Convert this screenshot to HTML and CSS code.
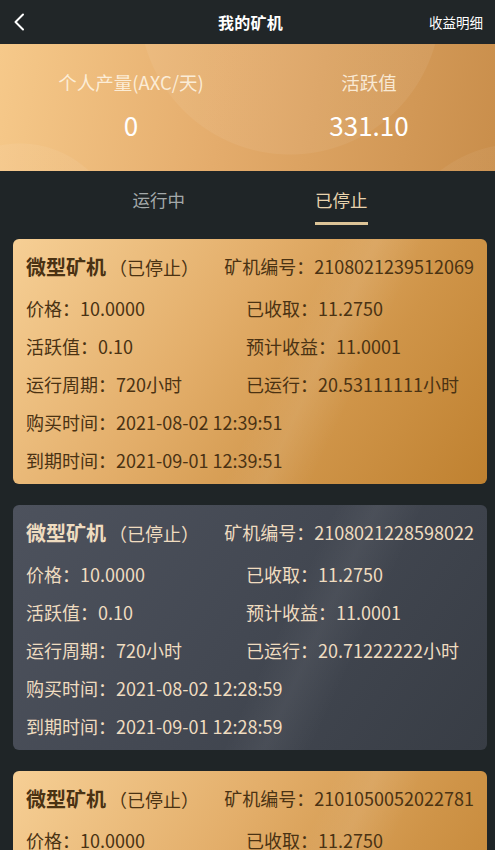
FILE: index.html
```html
<!DOCTYPE html>
<html lang="zh-CN">
<head>
<meta charset="utf-8">
<title>我的矿机</title>
<link rel="stylesheet" href="styles.css">
</head>
<body>
<header class="topbar">
  <span class="back">
    <svg width="12" height="18" viewBox="0 0 12 18"><path d="M10 1.5 L2.5 9 L10 16.5" fill="none" stroke="#fff" stroke-width="2" stroke-linecap="round" stroke-linejoin="round"/></svg>
  </span>
  <h1 class="title">我的矿机</h1>
  <span class="detail">收益明细</span>
</header>

<section class="banner">
  <div class="stat">
    <div class="stat-label">个人产量(AXC/天)</div>
    <div class="stat-value">0</div>
  </div>
  <div class="stat">
    <div class="stat-label">活跃值</div>
    <div class="stat-value">331.10</div>
  </div>
</section>

<nav class="tabs">
  <div class="tab">运行中</div>
  <div class="tab active">已停止</div>
</nav>

<main class="list">
  <div class="card gold">
    <div class="card-head">
      <div class="name"><b>微型矿机</b><span class="state">（已停止）</span></div>
      <div class="code">矿机编号：2108021239512069</div>
    </div>
    <div class="grid">
      <div class="row">价格：10.0000</div>
      <div class="row">已收取：11.2750</div>
      <div class="row">活跃值：0.10</div>
      <div class="row">预计收益：11.0001</div>
      <div class="row">运行周期：720小时</div>
      <div class="row">已运行：20.53111111小时</div>
      <div class="row full">购买时间：2021-08-02 12:39:51</div>
      <div class="row full">到期时间：2021-09-01 12:39:51</div>
    </div>
  </div>

  <div class="card slate">
    <div class="card-head">
      <div class="name"><b>微型矿机</b><span class="state">（已停止）</span></div>
      <div class="code">矿机编号：2108021228598022</div>
    </div>
    <div class="grid">
      <div class="row">价格：10.0000</div>
      <div class="row">已收取：11.2750</div>
      <div class="row">活跃值：0.10</div>
      <div class="row">预计收益：11.0001</div>
      <div class="row">运行周期：720小时</div>
      <div class="row">已运行：20.71222222小时</div>
      <div class="row full">购买时间：2021-08-02 12:28:59</div>
      <div class="row full">到期时间：2021-09-01 12:28:59</div>
    </div>
  </div>

  <div class="card gold">
    <div class="card-head">
      <div class="name"><b>微型矿机</b><span class="state">（已停止）</span></div>
      <div class="code">矿机编号：2101050052022781</div>
    </div>
    <div class="grid">
      <div class="row">价格：10.0000</div>
      <div class="row">已收取：11.2750</div>
      <div class="row">活跃值：0.10</div>
      <div class="row">预计收益：11.0001</div>
      <div class="row">运行周期：720小时</div>
      <div class="row">已运行：20.71222222小时</div>
      <div class="row full">购买时间：2021-01-05 00:52:02</div>
      <div class="row full">到期时间：2021-02-04 00:52:02</div>
    </div>
  </div>
</main>
</body>
</html>
```

FILE: styles.css
```css
* { box-sizing: border-box; margin: 0; padding: 0; }
html, body { background: #1f2527; }
body {
  font-family: "Noto Sans CJK SC", "Noto Sans", sans-serif;
  color: #fff;
  width: 495px;
  overflow: hidden;
}
.topbar {
  height: 44px;
  background: #212628;
  display: flex;
  align-items: center;
  justify-content: space-between;
  padding: 0 12px 0 13px;
}
.back { width: 60px; display: flex; align-items: center; height: 44px; }
.back svg { display: block; }
.title {
  font-size: 16px;
  font-weight: 700;
  color: #fff;
  letter-spacing: 0.3px;
  padding-left: 5px;
}
.detail { width: 60px; font-size: 13.5px; text-align: right; white-space: nowrap; color: #fff; }

.banner {
  height: 127px;
  display: grid;
  grid-template-columns: 238px 238px;
  padding-left: 12px;
  padding-bottom: 2px;
  align-content: center;
  background:
    radial-gradient(circle at 20px 200px, rgba(255,255,255,0.06) 0 100px, transparent 101px),
    radial-gradient(circle at 290px -40px, rgba(255,255,255,0.06) 0 150px, transparent 151px),
    radial-gradient(circle at 520px 230px, rgba(255,255,255,0.05) 0 130px, transparent 131px),
    linear-gradient(100deg, #f6c98a 0%, #e4ac6c 45%, #c98e4b 100%);
}
.stat { text-align: center; }
.stat-label {
  font-size: 18.5px;
  line-height: 24px;
  color: rgba(255, 247, 232, 0.85);
}
.stat-value {
  font-size: 26px;
  line-height: 36px;
  margin-top: 13px;
  color: #fff;
}

.tabs {
  display: flex;
  justify-content: center;
  gap: 130px;
  padding-left: 5px;
  height: 68px;
}
.tab {
  font-size: 17.5px;
  line-height: 28px;
  padding-top: 15px;
  color: #a3a9aa;
  height: 54px;
}
.tab.active {
  color: #e8d3ad;
  border-bottom: 3px solid #dcc497;
  height: 54px;
}

.list { padding: 0 8px 0 13px; display: flex; flex-direction: column; gap: 21px; }
.card {
  border-radius: 6px;
  padding: 12px 13px 5px 13px;
  height: 245px;
  font-size: 18px;
}
.card.gold {
  color: #4a3213;
  background:
    linear-gradient(115deg, rgba(255,255,255,0) 55%, rgba(255,255,255,0.08) 62%, rgba(255,255,255,0) 70%),
    linear-gradient(125deg, #f6cf95 0%, #e3ae6a 40%, #cf9448 70%, #bf8130 100%);
}
.card.slate {
  color: #efdcc0;
  background:
    linear-gradient(115deg, rgba(255,255,255,0) 55%, rgba(255,255,255,0.05) 62%, rgba(255,255,255,0) 70%),
    linear-gradient(125deg, #4d525d 0%, #434852 50%, #383d45 100%);
}
.card-head {
  display: flex;
  justify-content: space-between;
  align-items: center;
  height: 30px;
  white-space: nowrap;
}
.name b { font-size: 20px; font-weight: 700; }
.state { font-size: 18px; margin-left: 3px; }
.code { font-size: 18px; }
.grid {
  display: grid;
  grid-template-columns: 220px 1fr;
  margin-top: 8px;
}
.row {
  height: 38px;
  line-height: 38px;
  white-space: nowrap;
}
.row.full { grid-column: 1 / -1; }
```
